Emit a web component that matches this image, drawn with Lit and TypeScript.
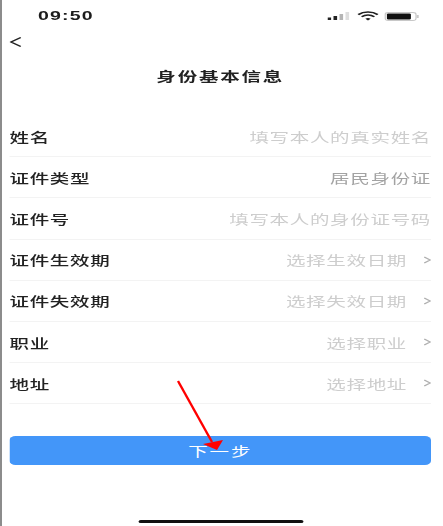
import { LitElement, html, css } from 'lit';
import { customElement } from 'lit/decorators.js';

interface Field {
  label: string;
  value: string;
  filled?: boolean;
  arrow?: boolean;
}

const FIELDS: Field[] = [
  { label: '姓名', value: '填写本人的真实姓名' },
  { label: '证件类型', value: '居民身份证', filled: true },
  { label: '证件号', value: '填写本人的身份证号码' },
  { label: '证件生效期', value: '选择生效日期', arrow: true },
  { label: '证件失效期', value: '选择失效日期', arrow: true },
  { label: '职业', value: '选择职业', arrow: true },
  { label: '地址', value: '选择地址', arrow: true },
];

@customElement('app-root')
export class AppRoot extends LitElement {
  static styles = css`
    :host {
      display: block;
      position: relative;
      width: 443px;
      height: 526px;
      overflow: hidden;
      background: #fff;
      border-left: 2px solid #8c8c8c;
      box-sizing: border-box;
      font-family: "Liberation Sans", "Noto Sans CJK SC", sans-serif;
      color: #222;
    }

    /* the source shot is stretched sideways, so the whole screen is too */
    .screen {
      display: flex;
      flex-direction: column;
      width: 291px;
      height: 526px;
      transform: scaleX(1.5);
      transform-origin: 0 0;
      filter: blur(0.5px);
    }

    .status {
      display: flex;
      justify-content: space-between;
      align-items: center;
      height: 30px;
      padding: 0 12px 0 24px;
      flex: none;
    }

    .time {
      font-size: 13px;
      font-weight: 700;
      letter-spacing: 0.8px;
      color: #1c1c1c;
    }

    .status-icons {
      display: block;
      width: 62px;
      height: 12px;
      margin-top: 1px;
    }

    .nav {
      display: flex;
      align-items: center;
      height: 24px;
      padding-left: 5px;
      flex: none;
    }

    .nav svg {
      width: 8px;
      height: 12px;
    }

    h1 {
      margin: 14px 0 0;
      height: 18px;
      line-height: 18px;
      font-size: 13px;
      font-weight: 700;
      letter-spacing: 1.2px;
      text-align: center;
      color: #222;
      flex: none;
    }

    .fields {
      margin-top: 30px;
      padding: 0 5px;
      flex: none;
    }

    .row {
      display: flex;
      justify-content: space-between;
      align-items: center;
      height: 41.2px;
      box-sizing: border-box;
      border-bottom: 1px solid #f3f3f3;
      font-size: 13px;
      letter-spacing: 0.45px;
    }

    .label {
      font-weight: 500;
    }

    .value {
      display: flex;
      align-items: center;
      color: #cdcdcd;
    }

    .value.filled {
      color: #a3a3a3;
    }

    .value svg {
      width: 5px;
      height: 8px;
      margin-left: 11px;
    }

    .next {
      display: block;
      margin: 32px 5px 0;
      width: calc(100% - 10px);
      height: 29px;
      padding: 0;
      border: none;
      border-radius: 4px;
      background: #4396f9;
      color: #fff;
      font: inherit;
      font-size: 13px;
      letter-spacing: 1.2px;
      flex: none;
    }

    .home {
      width: 110px;
      height: 3px;
      margin: auto auto 3px;
      border-radius: 2px;
      background: #111;
      flex: none;
    }

    .arrow {
      position: absolute;
      left: -2px;
      top: 0;
      width: 443px;
      height: 526px;
      filter: blur(0.3px);
    }
  `;

  render() {
    return html`
      <div class="screen">
        <div class="status">
          <span class="time">09:50</span>
          <svg class="status-icons" viewBox="0 0 62 12">
            <rect x="0" y="7.5" width="2.4" height="2.5" fill="#222"></rect>
            <rect x="4" y="6" width="2.4" height="4" fill="#222"></rect>
            <rect x="8" y="4" width="2.4" height="6" fill="#b5b5b5"></rect>
            <rect x="12" y="2" width="2.4" height="8" fill="#dedede"></rect>
            <path d="M20.5 4.6a9.5 9.5 0 0 1 13 0" fill="none" stroke="#222" stroke-width="1.5"></path>
            <path d="M22.8 6.8a6 6 0 0 1 8.4 0" fill="none" stroke="#222" stroke-width="1.5"></path>
            <path d="M25.2 8.8l1.8 1.7 1.8-1.7a2.6 2.6 0 0 0-3.6 0z" fill="#222"></path>
            <rect x="38.5" y="2.5" width="20.5" height="8" rx="2" fill="none" stroke="#c8c8c8" stroke-width="0.8"></rect>
            <rect x="39.6" y="3.6" width="16" height="5.8" rx="1" fill="#111"></rect>
            <rect x="59.4" y="5" width="1.4" height="3" fill="#c8c8c8"></rect>
          </svg>
        </div>

        <div class="nav">
          <svg viewBox="0 0 8 12">
            <path d="M7.5 1.5L1 6l6.5 4.5" fill="none" stroke="#222" stroke-width="1.3"></path>
          </svg>
        </div>

        <h1>身份基本信息</h1>

        <div class="fields">
          ${FIELDS.map(
            (f) => html`
              <div class="row">
                <span class="label">${f.label}</span>
                <span class="value ${f.filled ? 'filled' : ''}">
                  ${f.value}
                  ${f.arrow
                    ? html`<svg viewBox="0 0 5 8">
                        <path d="M0.5 1L4.5 4L0.5 7" fill="none" stroke="#b0b0b0" stroke-width="1"></path>
                      </svg>`
                    : ''}
                </span>
              </div>
            `
          )}
        </div>

        <button class="next">下一步</button>
        <div class="home"></div>
      </div>

      <svg class="arrow" viewBox="0 0 443 526">
        <line x1="178" y1="381" x2="212" y2="442" stroke="#f00" stroke-width="2.4"></line>
        <polygon points="203,444 223,440 217,450" fill="#f00"></polygon>
      </svg>
    `;
  }
}
